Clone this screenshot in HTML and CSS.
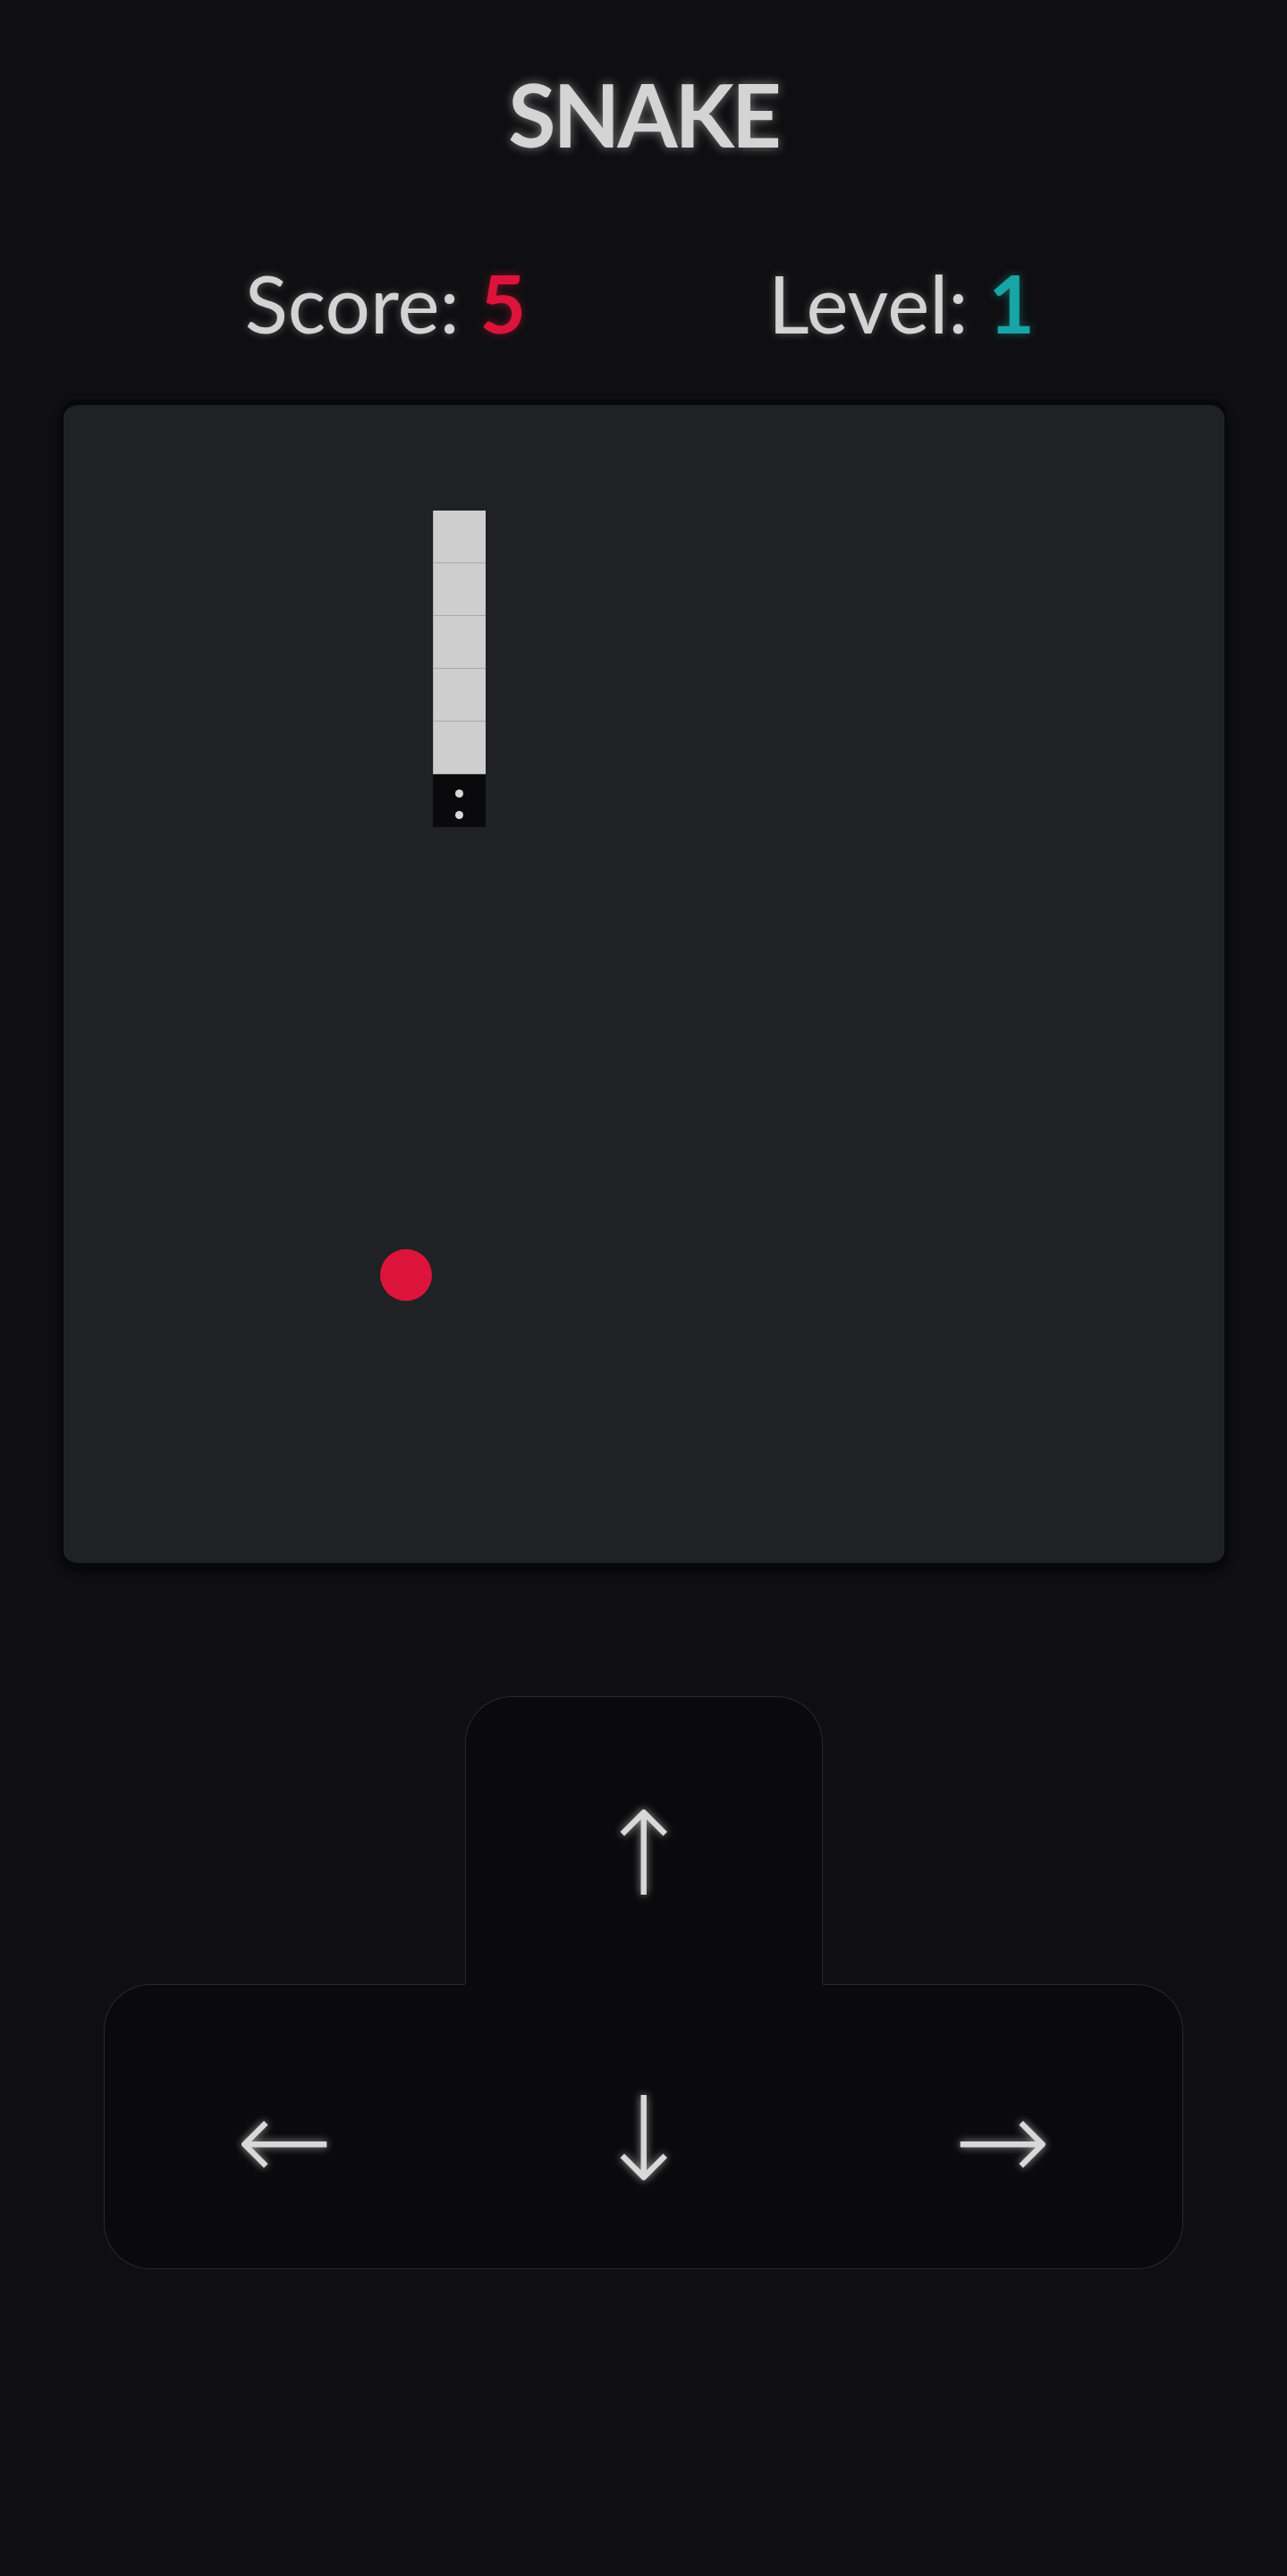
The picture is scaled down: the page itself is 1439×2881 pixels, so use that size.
FILE: index.html
```html
<!DOCTYPE html>
<html lang="en">
<head>
<meta charset="utf-8">
<title>Snake</title>
<link rel="stylesheet" href="styles.css">
</head>
<body>
<main class="game">
  <h1 class="title">SNAKE</h1>
  <div class="stats">
    <div class="stat">Score: <span class="value score">5</span></div>
    <div class="stat">Level: <span class="value level">1</span></div>
  </div>
  <div class="board">
    <div class="cell body" style="--x:7;--y:2"></div>
    <div class="cell body" style="--x:7;--y:3"></div>
    <div class="cell body" style="--x:7;--y:4"></div>
    <div class="cell body" style="--x:7;--y:5"></div>
    <div class="cell body" style="--x:7;--y:6"></div>
    <div class="cell head" style="--x:7;--y:7"><span class="eye"></span><span class="eye"></span></div>
    <div class="cell food" style="--x:6;--y:16"></div>
  </div>
  <div class="dpad">
    <button class="key up" type="button">↑</button>
    <button class="key left" type="button">←</button>
    <button class="key down" type="button">↓</button>
    <button class="key right" type="button">→</button>
  </div>
</main>
</body>
</html>
```
FILE: styles.css
```css
* { box-sizing: border-box; }

html, body {
  margin: 0;
  background: #0f0f11;
}

body {
  min-height: 2881px;
  font-family: Lato, "Open Sans", sans-serif;
  color: #d3d3d3;
}

.game {
  display: flex;
  flex-direction: column;
  align-items: center;
}

.title {
  margin: 67px 0 0;
  font-size: 97px;
  line-height: 122px;
  font-weight: 700;
  letter-spacing: -3px;
  color: #d4d4d4;
  text-shadow: 0 0 12px rgba(255, 255, 255, 0.45);
}

.stats {
  margin-top: 98px;
  width: 1154px;
  display: grid;
  grid-template-columns: 1fr 1fr;
  justify-items: center;
  font-size: 89px;
  line-height: 103px;
  text-shadow: 0 0 10px rgba(255, 255, 255, 0.3);
}

.value { font-weight: 700; }
.score { color: #dc143c; text-shadow: 0 0 10px rgba(220, 20, 60, 0.5); }
.level { color: #17a5a5; text-shadow: 0 0 10px rgba(23, 165, 165, 0.5); }

.board {
  position: relative;
  width: 1304px;
  height: 1308px;
  margin-top: 57px;
  background: #1f2124;
  border-style: solid;
  border-color: #06080a;
  border-width: 6px 3px 7px;
  border-radius: 20px;
  box-shadow: 0 3px 8px rgba(0, 0, 0, 0.6);
}

.cell {
  position: absolute;
  left: calc(var(--x) * 59px);
  top: calc(var(--y) * 59px);
  width: 59px;
  height: 59px;
}

.body {
  background: #cecece;
  box-shadow: inset 0 -1px 0 #a9a9a9, inset 1px 0 0 #b0b0b0;
}

.head {
  background: #0a0a0c;
  display: flex;
  flex-direction: column;
  align-items: center;
  justify-content: center;
  gap: 15px;
  padding-top: 7px;
}

.eye {
  width: 9px;
  height: 9px;
  border-radius: 50%;
  background: #d8d8d8;
}

.food {
  width: 58px;
  height: 58px;
  border-radius: 50%;
  background: #dc143c;
}

.dpad {
  margin-top: 142px;
  display: grid;
  grid-template-columns: 404px 400px 403px;
  grid-template-rows: 322px 319px;
}

.key {
  margin: 0;
  padding: 30px 0 0;
  background: #0a0a0c;
  border: 1px solid #2a2a2e;
  color: #d8d8d8;
  font-family: "DejaVu Sans", sans-serif;
  font-weight: 200;
  font-size: 130px;
  line-height: 1;
  display: flex;
  align-items: center;
  justify-content: center;
  text-shadow: 0 0 10px rgba(255, 255, 255, 0.6);
}

.up {
  grid-column: 2;
  grid-row: 1;
  border-bottom: none;
  border-radius: 52px 52px 0 0;
}

.left {
  grid-column: 1;
  grid-row: 2;
  border-right: none;
  border-radius: 52px 0 0 52px;
}

.down {
  grid-column: 2;
  grid-row: 2;
  border-top: none;
  border-left: none;
  border-right: none;
}

.right {
  grid-column: 3;
  grid-row: 2;
  border-left: none;
  border-radius: 0 52px 52px 0;
}
```
